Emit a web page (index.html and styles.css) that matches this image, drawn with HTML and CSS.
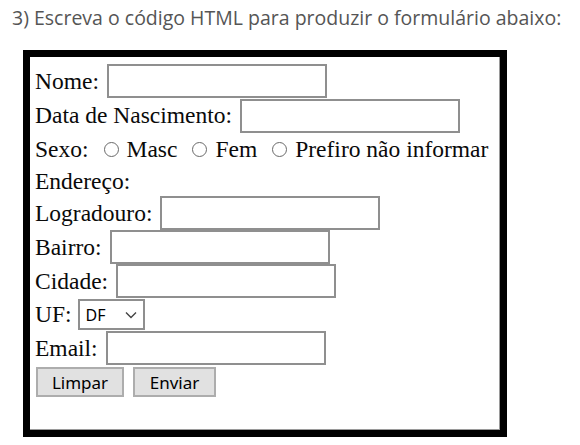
FILE: index.html
```html
<!DOCTYPE html>
<html lang="pt-BR">
<head>
<meta charset="utf-8">
<title>Formulário</title>
<link rel="stylesheet" href="styles.css">
</head>
<body>
<p class="question">3) Escreva o código HTML para produzir o formulário abaixo:</p>
<form class="frame">
  <div class="row r34"><label>Nome:</label><input class="field" type="text"></div>
  <div class="row r35"><label>Data de Nascimento:</label><input class="field" type="text"></div>
  <div class="row r33 sexo">
    <span>Sexo:</span>
    <input class="radio" type="radio" name="sexo"><span>Masc</span>
    <input class="radio" type="radio" name="sexo"><span>Fem</span>
    <input class="radio" type="radio" name="sexo"><span>Prefiro não informar</span>
  </div>
  <div class="row r30"><span>Endereço:</span></div>
  <div class="row r34"><label>Logradouro:</label><input class="field" type="text"></div>
  <div class="row r34"><label>Bairro:</label><input class="field" type="text"></div>
  <div class="row r34"><label>Cidade:</label><input class="field" type="text"></div>
  <div class="row r33 uf"><label>UF:</label>
    <span class="select-wrap">
      <select class="select"><option>DF</option></select>
      <svg class="chevron" width="12" height="8" viewBox="0 0 12 8"><path d="M1 1.5 L6 6.5 L11 1.5" fill="none" stroke="#444" stroke-width="1.4"/></svg>
    </span>
  </div>
  <div class="row r34"><label>Email:</label><input class="field" type="text"></div>
  <div class="buttons">
    <button class="btn" type="reset">Limpar</button>
    <button class="btn btn-send" type="button">Enviar</button>
  </div>
</form>
</body>
</html>
```

FILE: styles.css
```css
html, body {
  margin: 0;
  padding: 0;
  background: #fff;
}

.question {
  margin: 0;
  padding: 5px 0 0 12px;
  height: 44px;
  box-sizing: border-box;
  font-family: "Open Sans", "Noto Sans", sans-serif;
  font-size: 19.5px;
  line-height: 26px;
  color: #555;
  white-space: nowrap;
}

.frame {
  margin: 6px 0 0 23px;
  width: 484px;
  height: 387px;
  box-sizing: border-box;
  border: 7px solid #000;
  box-shadow: inset -1px -1px 0 #9a9a9a;
  padding: 7px 0 0 5px;
  display: flex;
  flex-direction: column;
  font-family: "Liberation Serif", "Times New Roman", serif;
  font-size: 23.5px;
  color: #0a0a0a;
}

.row {
  display: flex;
  align-items: center;
  gap: 8px;
  white-space: nowrap;
}

.r30 { height: 30px; }
.r33 { height: 33px; }
.r34 { height: 34px; }
.r35 { height: 35px; }

.field {
  width: 220px;
  height: 34px;
  box-sizing: border-box;
  margin: 0;
  border: 2px solid #8f8f8f;
  background: #fff;
  padding: 0 4px;
  font-size: 17px;
}

.sexo { gap: 0; }

.radio {
  appearance: none;
  -webkit-appearance: none;
  width: 15px;
  height: 15px;
  box-sizing: border-box;
  border: 1.5px solid #6a6a6a;
  border-radius: 50%;
  margin: 0 8px 0 15px;
  background: #fff;
}

.select-wrap {
  position: relative;
  display: inline-block;
  margin-left: -2px;
}

.select {
  appearance: none;
  -webkit-appearance: none;
  width: 67px;
  height: 31px;
  box-sizing: border-box;
  margin: 0;
  border: 2px solid #8f8f8f;
  background: #fff;
  padding: 0 0 0 6px;
  font-family: "Noto Sans", "Open Sans", sans-serif;
  font-size: 16px;
  color: #000;
}

.chevron {
  position: absolute;
  right: 8px;
  top: 12px;
  pointer-events: none;
}

.buttons {
  display: flex;
  gap: 9px;
  padding: 2px 0 0 1px;
}

.btn {
  height: 30px;
  width: 88px;
  box-sizing: border-box;
  margin: 0;
  border: 2px solid #adadad;
  background: #e1e1e1;
  font-family: "Noto Sans", "Open Sans", sans-serif;
  font-size: 17px;
  color: #000;
  padding: 0;
}

.btn-send { width: 83px; }
```
